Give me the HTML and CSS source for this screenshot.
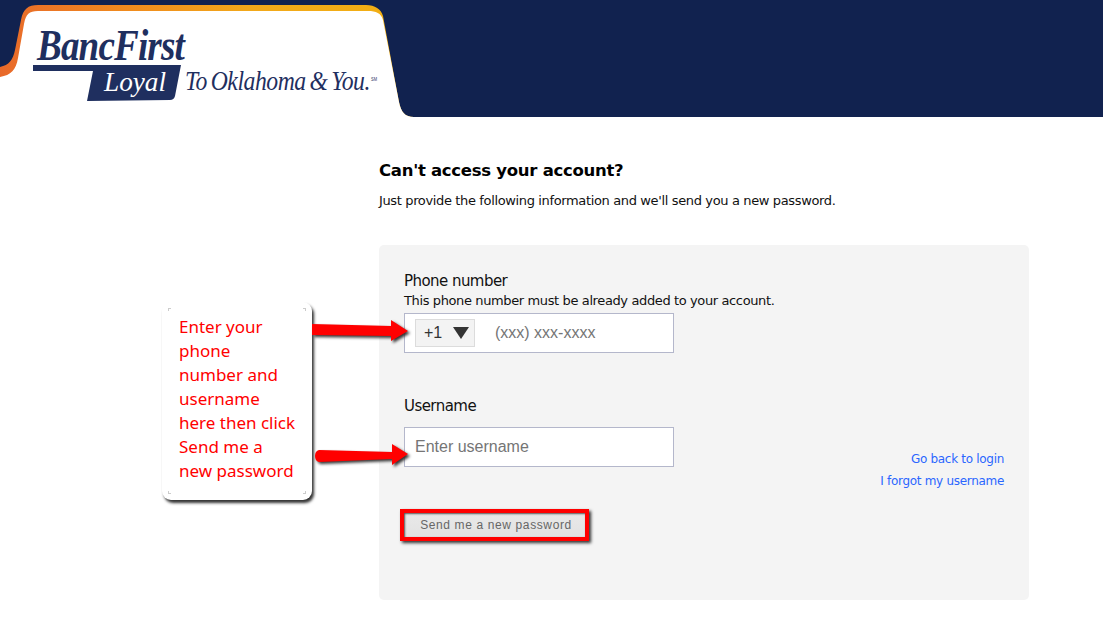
FILE: index.html
```html
<!DOCTYPE html>
<html lang="en">
<head>
<meta charset="utf-8">
<title>BancFirst - Can't access your account?</title>
<link rel="stylesheet" href="styles.css">
</head>
<body>
<header class="banner">
  <svg class="logo" width="420" height="117" viewBox="0 0 420 117">
    <defs>
      <linearGradient id="edge" x1="0" x2="1" y1="0" y2="0">
        <stop offset="0" stop-color="#e8692a"/>
        <stop offset=".3" stop-color="#f08a1e"/>
        <stop offset=".6" stop-color="#f2a81a"/>
        <stop offset="1" stop-color="#f2b012"/>
      </linearGradient>
    </defs>
    <path fill="url(#edge)" d="M0 67C9 65 13 60 15 50L21 20C23 9 28 5 38 5L366 5C375 5 381 9 383 16L399 102C401 112 405 117 414 117L0 117Z"/>
    <path fill="#fff" d="M0 77C11 75 16 70 18 58L24 24C26 14 29 11 38 11L368 11C376 11 381 13 383 20L399 102C401 112 405 117 414 117L0 117Z"/>
    <path fill="#1f2f5f" d="M33 65L181 65L175 96Q174 100 170 100L87 101L93 71L33 71Z"/>
    <text class="logo-name" x="37" y="60" textLength="147" lengthAdjust="spacingAndGlyphs">BancFirst</text>
    <text class="logo-loyal" x="104" y="91" textLength="62" lengthAdjust="spacingAndGlyphs">Loyal</text>
    <text class="logo-tag" x="185" y="90" textLength="185" lengthAdjust="spacingAndGlyphs">To Oklahoma &amp; You.</text>
    <text class="logo-sm" x="371" y="81" textLength="6" lengthAdjust="spacingAndGlyphs">SM</text>
  </svg>
</header>

<main class="content">
  <h1 class="title">Can't access your account?</h1>
  <p class="intro">Just provide the following information and we'll send you a new password.</p>

  <form class="panel">
    <div class="fields">
      <div class="field phone-field">
        <label class="label">Phone number</label>
        <p class="hint">This phone number must be already added to your account.</p>
        <div class="input-box phone-box">
          <span class="country">+1<span class="caret"></span></span>
          <span class="placeholder">(xxx) xxx-xxxx</span>
        </div>
      </div>
      <div class="field user-field">
        <label class="label">Username</label>
        <div class="input-box">
          <span class="placeholder">Enter username</span>
        </div>
      </div>
      <button class="submit" type="button">Send me a new password</button>
    </div>
    <nav class="links">
      <a class="link" href="#">Go back to login</a>
      <a class="link" href="#">I forgot my username</a>
    </nav>
  </form>
</main>

<aside class="callout">
  <i class="tick tl"></i><i class="tick tr"></i><i class="tick bl"></i><i class="tick br"></i>
  <p class="callout-text">Enter your phone number and username here then click Send me a new password</p>
</aside>
<svg class="arrows" width="110" height="160" viewBox="310 315 110 160">
  <path fill="#f00" d="M312 324L391 326L391 320L408 331L391 341L391 336L312 335Z"/>
  <path fill="#f00" d="M319 450L392 452L392 444L408 454L392 465L392 459L319 462Q315 461 315 456Q315 451 319 450Z"/>
</svg>
<div class="highlight"></div>
</body>
</html>
```
FILE: styles.css
```css
* { box-sizing: border-box; }
html, body { margin: 0; padding: 0; }
body {
  position: relative;
  width: 1103px;
  height: 630px;
  overflow: hidden;
  background: #fff;
  font-family: "DejaVu Sans", sans-serif;
  color: #000;
}
.banner {
  height: 117px;
  background: #11224f;
}
.logo { display: block; }
.logo-name {
  font: italic 700 44px "Liberation Serif", serif;
  letter-spacing: -1px;
  fill: #1f2f5f;
}
.logo-loyal { font: italic 400 28px "Liberation Serif", serif; fill: #fff; }
.logo-tag {
  font: italic 400 27px "Liberation Serif", serif;
  letter-spacing: -.5px;
  word-spacing: -2px;
  fill: #1f2f5f;
}
.logo-sm { font: 400 6px "Liberation Sans", sans-serif; fill: #1f2f5f; }

.content {
  width: 650px;
  margin-left: 379px;
  padding-top: 43px;
}
.title {
  margin: 0;
  font-size: 16.5px;
  line-height: 22px;
  font-weight: 700;
  letter-spacing: -.28px;
}
.intro {
  margin: 10px 0 0;
  font-size: 13px;
  line-height: 18px;
  letter-spacing: -.36px;
  color: #111;
}
.panel {
  display: flex;
  justify-content: space-between;
  align-items: flex-start;
  height: 355px;
  margin-top: 35px;
  padding: 26px 25px 59px;
  background: #f4f4f4;
  border-radius: 5px;
}
.fields { display: flex; flex-direction: column; width: 270px; }
.label {
  display: block;
  font-size: 15px;
  line-height: 20px;
  letter-spacing: -.55px;
  color: #111;
}
.hint {
  margin: 1px 0 3px;
  font-size: 13px;
  line-height: 18px;
  letter-spacing: -.38px;
  white-space: nowrap;
  color: #111;
}
.input-box {
  display: flex;
  align-items: center;
  height: 40px;
  padding: 0 10px;
  background: #fff;
  border: 1px solid #b4b7cb;
  font: 16px "Liberation Sans", sans-serif;
}
.phone-box { gap: 20px; }
.user-field { margin-top: 43px; }
.user-field .label { margin-bottom: 11px; }
.placeholder { color: #757575; }
.country {
  display: flex;
  align-items: center;
  justify-content: space-between;
  width: 60px;
  height: 28px;
  padding: 0 5px 0 8px;
  background: #f3f3f3;
  border: 1px solid #dcdcdc;
  color: #333;
}
.caret {
  width: 0;
  height: 0;
  border-left: 8.5px solid transparent;
  border-right: 8.5px solid transparent;
  border-top: 12px solid #333;
}
.submit {
  align-self: flex-start;
  width: 184px;
  height: 26px;
  margin-top: 45px;
  padding: 0;
  border: 0;
  background: linear-gradient(#e9e9e9, #e2e2e2);
  font-family: "Liberation Sans", sans-serif;
  font-size: 12px;
  letter-spacing: .62px;
  color: #666;
}
.links {
  align-self: flex-end;
  display: flex;
  flex-direction: column;
  align-items: flex-end;
  gap: 4px;
  margin-bottom: 51px;
}
.link {
  font-size: 12px;
  line-height: 18px;
  letter-spacing: -.3px;
  color: #2a66ff;
  text-decoration: none;
}

/* annotations drawn over the page */
.callout {
  position: absolute;
  left: 162px;
  top: 302px;
  width: 150px;
  height: 198px;
  padding: 13px 15px 0 17px;
  background: #fff;
  border-radius: 9px;
  box-shadow: 2px 3px 3px #333;
}
.callout-text {
  margin: 0;
  font: 17px/24px "Noto Sans", sans-serif;
  color: #f00;
}
.tick {
  position: absolute;
  width: 3px;
  height: 3px;
  border: 0 solid #ccc;
}
.tl { left: 6px; top: 6px; border-width: 1px 0 0 1px; }
.tr { right: 6px; top: 6px; border-width: 1px 1px 0 0; }
.bl { left: 6px; bottom: 6px; border-width: 0 0 1px 1px; }
.br { right: 6px; bottom: 6px; border-width: 0 1px 1px 0; }
.arrows {
  position: absolute;
  left: 310px;
  top: 315px;
  filter: drop-shadow(2px 2px 1.5px #333);
}
.highlight {
  position: absolute;
  left: 400px;
  top: 509px;
  width: 189px;
  height: 32px;
  border: 4px solid #f00;
  box-shadow: 2px 2px 3px #333, inset 1px 1px 2px #555;
}
```
